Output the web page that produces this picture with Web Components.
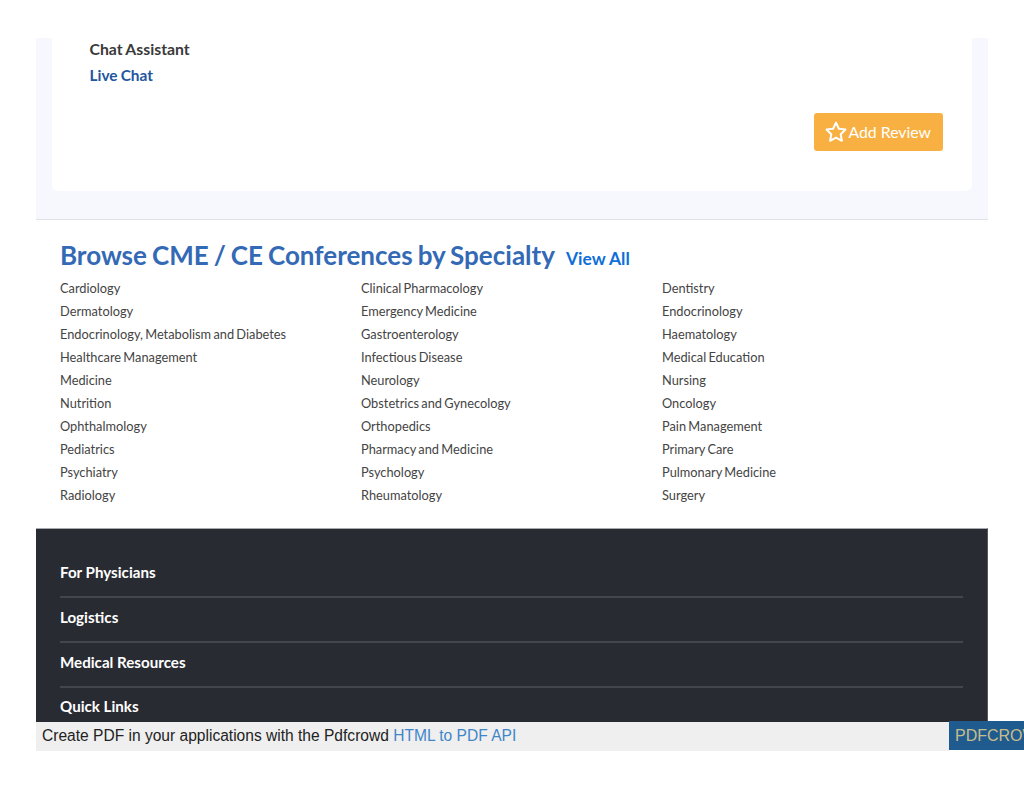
<!DOCTYPE html>
<html lang="en">
<head>
<meta charset="utf-8">
<title>Browse CME / CE Conferences by Specialty</title>
<style>
    html, body { margin: 0; background: #fff; }
    body { height: 791px; overflow: hidden; padding: 38px 0 0 36px; box-sizing: border-box; font-family: "Lato", sans-serif; }
    .sheet { width: 952px; }
</style>
</head>
<body>
<div class="sheet">
    <review-panel></review-panel>
    <specialty-browser></specialty-browser>
    <footer-menu>
        <footer-row>For Physicians</footer-row>
        <footer-row>Logistics</footer-row>
        <footer-row>Medical Resources</footer-row>
        <footer-row last>Quick Links</footer-row>
    </footer-menu>
</div>
<pdf-banner></pdf-banner>

<script>
// Card with the chat contact and the review button
class ReviewPanel extends HTMLElement {
    constructor() {
        super();
        this.attachShadow({ mode: 'open' }).innerHTML = `
            <style>
                :host { display: block; background: #f7f8fe; padding: 0 16px 28px 16px; border-bottom: 1px solid #e1e2e8; }
                .card { background: #fff; border-radius: 0 0 6px 6px; height: 153px; padding: 0 29px 0 37.5px; box-sizing: border-box; display: flex; flex-direction: column; }
                .label { font-size: 15.8px; line-height: 22px; font-weight: 700; color: #3a3a3a; word-spacing: -0.6px; }
                .chat { font-size: 15.4px; line-height: 24px; font-weight: 700; color: #23569f; margin-top: 3px; text-decoration: none; word-spacing: -0.6px; }
                .actions { display: flex; justify-content: flex-end; margin-top: 26px; }
                .btn { display: flex; align-items: center; gap: 1px; height: 38px; width: 129px; box-sizing: border-box; padding-left: 9.5px; background: #f9b042; border-radius: 3px; color: #fff; font-size: 15.8px; }
                .btn span { padding-bottom: 2px; }
                svg { width: 24px; height: 24px; display: block; flex: none; }
            </style>
            <div class="card">
                <div class="label">Chat Assistant</div>
                <a class="chat">Live Chat</a>
                <div class="actions">
                    <div class="btn">
                        <svg viewBox="0 0 24 24" fill="none" stroke="#fff" stroke-width="2" stroke-linejoin="round">
                            <path d="M12 2.6l2.9 6.1 6.6.9-4.8 4.6 1.2 6.6-5.9-3.2-5.9 3.2 1.2-6.6-4.8-4.6 6.6-.9z"/>
                        </svg>
                        <span>Add Review</span>
                    </div>
                </div>
            </div>`;
    }
}

const SPECIALTIES = [
    ['Cardiology', 'Clinical Pharmacology', 'Dentistry'],
    ['Dermatology', 'Emergency Medicine', 'Endocrinology'],
    ['Endocrinology, Metabolism and Diabetes', 'Gastroenterology', 'Haematology'],
    ['Healthcare Management', 'Infectious Disease', 'Medical Education'],
    ['Medicine', 'Neurology', 'Nursing'],
    ['Nutrition', 'Obstetrics and Gynecology', 'Oncology'],
    ['Ophthalmology', 'Orthopedics', 'Pain Management'],
    ['Pediatrics', 'Pharmacy and Medicine', 'Primary Care'],
    ['Psychiatry', 'Psychology', 'Pulmonary Medicine'],
    ['Radiology', 'Rheumatology', 'Surgery']
];

class SpecialtyBrowser extends HTMLElement {
    constructor() {
        super();
        const cells = SPECIALTIES.flat().map(s => `<a>${s}</a>`).join('');
        this.attachShadow({ mode: 'open' }).innerHTML = `
            <style>
                :host { display: block; height: 308px; padding: 16px 24px 0 24px; box-sizing: border-box; }
                .head { display: flex; align-items: baseline; gap: 11px; height: 38px; }
                h2 { margin: 0; font-size: 26px; line-height: 38px; font-weight: 700; color: #3369b5; word-spacing: -1.3px; }
                .all { font-size: 17.45px; font-weight: 700; color: #0f6fd8; }
                .grid { display: grid; grid-template-columns: repeat(3, 301px); grid-auto-rows: 23px; margin-top: 3px; font-size: 12.8px; line-height: 23px; color: #444; word-spacing: -1px; }
            </style>
            <div class="head"><h2>Browse CME / CE Conferences by Specialty</h2><a class="all">View All</a></div>
            <div class="grid">${cells}</div>`;
    }
}

class FooterMenu extends HTMLElement {
    constructor() {
        super();
        this.attachShadow({ mode: 'open' }).innerHTML = `
            <style>
                :host { display: block; height: 194px; overflow: hidden; background: #292b33; border-top: 1px solid #a9aaad; box-sizing: border-box; padding: 24px 24px 0 24px; border-right: 1px solid #55565c; }
            </style>
            <slot></slot>`;
    }
}

class FooterRow extends HTMLElement {
    constructor() {
        super();
        this.attachShadow({ mode: 'open' }).innerHTML = `
            <style>
                :host { display: block; height: 45px; box-sizing: border-box; border-bottom: 2px solid #44464d; color: #fff; font-size: 15.15px; font-weight: 700; line-height: 38px; }
                :host([last]) { border-bottom: 0; line-height: 36px; }
            </style>
            <slot></slot>`;
    }
}

// Banner stamped at the foot of the converted page
class PdfBanner extends HTMLElement {
    constructor() {
        super();
        this.attachShadow({ mode: 'open' }).innerHTML = `
            <style>
                :host { display: flex; width: 988px; height: 30px; margin-top: -1px; overflow: hidden; font-family: "Liberation Sans", Arial, sans-serif; font-size: 15.57px; align-items: flex-start; }
                .msg { width: 913px; height: 29px; margin-top: 1px; flex: none; background: #efefef; color: #222; padding-left: 6px; box-sizing: border-box; line-height: 27px; white-space: nowrap; }
                .msg a { color: #3f86c9; }
                .brand { flex: none; width: 100px; height: 29px; background: #1f5b8f; color: #c7bd8b; padding-left: 6px; font-size: 16px; line-height: 29px; white-space: nowrap; }
            </style>
            <div class="msg">Create PDF in your applications with the Pdfcrowd <a>HTML to PDF API</a></div>
            <div class="brand">PDFCROWD</div>`;
    }
}

customElements.define('review-panel', ReviewPanel);
customElements.define('specialty-browser', SpecialtyBrowser);
customElements.define('footer-menu', FooterMenu);
customElements.define('footer-row', FooterRow);
customElements.define('pdf-banner', PdfBanner);
</script>
</body>
</html>
